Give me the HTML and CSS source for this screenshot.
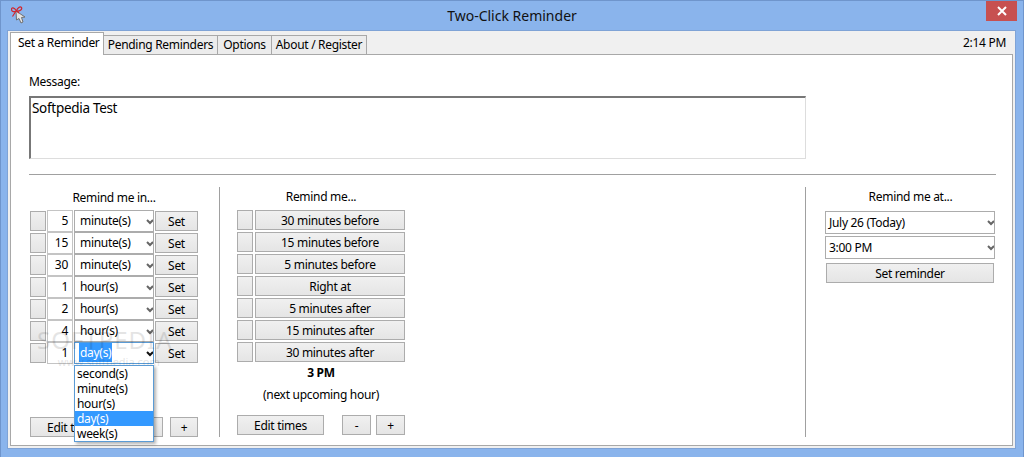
FILE: index.html
```html
<!DOCTYPE html>
<html>
<head>
<title>Two-Click Reminder</title>
<link rel="stylesheet" href="styles.css">
</head>
<body>
    <div class="window">
        <div class="title-bar">
            <svg class="app-icon" width="16" height="18" viewBox="0 0 16 18">
                <path d="M5 5 L5.5 14 L8 12.5 L10 17 L12 16 L10.5 11.5 L14 11 Z" fill="#e4e4e4" stroke="#707070" stroke-width="1"/>
                <path d="M5.5 5 C3 1 0.5 1 0.5 3.5 C0.5 6 3.5 6 5.5 5 C6.5 2 9 0 10.5 1.5 C11.5 3.5 8.5 5.5 5.5 5 M5 5 L1.5 10.5 M6 5 L8 7" fill="none" stroke="#d0272f" stroke-width="1.2"/>
            </svg>
            <span class="title-text">Two-Click Reminder</span>
            <button class="close-btn">
                <svg width="10" height="10" viewBox="0 0 10 10"><path d="M1 1 L9 9 M9 1 L1 9" stroke="#fff" stroke-width="2"/></svg>
            </button>
        </div>
        <div class="client">
            <div class="tab-row">
                <div class="tab active">Set a Reminder</div>
                <div class="tab tab-pending">Pending Reminders</div>
                <div class="tab tab-options">Options</div>
                <div class="tab tab-about">About / Register</div>
                <div class="clock">2:14 PM</div>
            </div>
            <div class="panel">
                <div class="message-label">Message:</div>
                <div class="message-box">Softpedia Test</div>
                <div class="rule"></div>
                <div class="columns">
                    <div class="col col-in">
                        <div class="col-title">Remind me in...</div>
                        <div class="row"><button class="btn square"></button><div class="num">5</div><div class="select unit">minute(s)<svg class="chev" width="8" height="6" viewBox="0 0 8 6"><path d="M1 1 L4 4 L7 1" fill="none" stroke="#666" stroke-width="2"/></svg></div><button class="btn set">Set</button></div>
                        <div class="row"><button class="btn square"></button><div class="num">15</div><div class="select unit">minute(s)<svg class="chev" width="8" height="6" viewBox="0 0 8 6"><path d="M1 1 L4 4 L7 1" fill="none" stroke="#666" stroke-width="2"/></svg></div><button class="btn set">Set</button></div>
                        <div class="row"><button class="btn square"></button><div class="num">30</div><div class="select unit">minute(s)<svg class="chev" width="8" height="6" viewBox="0 0 8 6"><path d="M1 1 L4 4 L7 1" fill="none" stroke="#666" stroke-width="2"/></svg></div><button class="btn set">Set</button></div>
                        <div class="row"><button class="btn square"></button><div class="num">1</div><div class="select unit">hour(s)<svg class="chev" width="8" height="6" viewBox="0 0 8 6"><path d="M1 1 L4 4 L7 1" fill="none" stroke="#666" stroke-width="2"/></svg></div><button class="btn set">Set</button></div>
                        <div class="row"><button class="btn square"></button><div class="num">2</div><div class="select unit">hour(s)<svg class="chev" width="8" height="6" viewBox="0 0 8 6"><path d="M1 1 L4 4 L7 1" fill="none" stroke="#666" stroke-width="2"/></svg></div><button class="btn set">Set</button></div>
                        <div class="row"><button class="btn square"></button><div class="num">4</div><div class="select unit">hour(s)<svg class="chev" width="8" height="6" viewBox="0 0 8 6"><path d="M1 1 L4 4 L7 1" fill="none" stroke="#666" stroke-width="2"/></svg></div><button class="btn set">Set</button></div>
                        <div class="row"><button class="btn square"></button><div class="num">1</div><div class="select unit open"><span class="picked">day(s)</span><svg class="chev" width="8" height="6" viewBox="0 0 8 6"><path d="M1 1 L4 4 L7 1" fill="none" stroke="#111" stroke-width="2"/></svg></div><button class="btn set">Set</button></div>
                        <div class="bottom-row"><button class="btn edit">Edit times</button><button class="btn small minus">-</button><button class="btn small">+</button></div>
                        <div class="watermark">SOFTPEDIA<span class="watermark-url">www.softpedia.com</span></div>
                        <ul class="dropdown">
                            <li>second(s)</li>
                            <li>minute(s)</li>
                            <li>hour(s)</li>
                            <li class="current">day(s)</li>
                            <li>week(s)</li>
                        </ul>
                    </div>
                    <div class="col col-me">
                        <div class="inner">
                            <div class="col-title">Remind me...</div>
                            <div class="row tight"><button class="btn square"></button><button class="btn wide">30 minutes before</button></div>
                            <div class="row tight"><button class="btn square"></button><button class="btn wide">15 minutes before</button></div>
                            <div class="row tight"><button class="btn square"></button><button class="btn wide">5 minutes before</button></div>
                            <div class="row tight"><button class="btn square"></button><button class="btn wide">Right at</button></div>
                            <div class="row tight"><button class="btn square"></button><button class="btn wide">5 minutes after</button></div>
                            <div class="row tight"><button class="btn square"></button><button class="btn wide">15 minutes after</button></div>
                            <div class="row tight"><button class="btn square"></button><button class="btn wide">30 minutes after</button></div>
                            <div class="hour">3 PM</div>
                            <div class="hour-note">(next upcoming hour)</div>
                            <div class="bottom-row"><button class="btn edit">Edit times</button><button class="btn small minus">-</button><button class="btn small">+</button></div>
                        </div>
                    </div>
                    <div class="col col-at">
                        <div class="col-title">Remind me at...</div>
                        <div class="select date">July 26 (Today)<svg class="chev" width="8" height="6" viewBox="0 0 8 6"><path d="M1 1 L4 4 L7 1" fill="none" stroke="#666" stroke-width="2"/></svg></div>
                        <div class="select date">3:00 PM<svg class="chev" width="8" height="6" viewBox="0 0 8 6"><path d="M1 1 L4 4 L7 1" fill="none" stroke="#666" stroke-width="2"/></svg></div>
                        <button class="btn set-reminder">Set reminder</button>
                    </div>
                </div>
            </div>
        </div>
    </div>
</body>
</html>
```

FILE: styles.css
```css
* {
    box-sizing: border-box;
}

body {
    margin: 0;
    font-family: 'Noto Sans', 'Open Sans', sans-serif;
    font-size: 12px;
    letter-spacing: -0.3px;
    color: #000000;
    background-color: #8ab4ec;
    overflow: hidden;
}

.window {
    width: 1024px;
    height: 457px;
    background-color: #8ab4ec;
    border: 1px solid #6f95cc;
    border-bottom: none;
    display: flex;
    flex-direction: column;
}

.title-bar {
    height: 29px;
    display: flex;
    align-items: flex-start;
    position: relative;
    flex-shrink: 0;
}

.app-icon {
    margin: 5px 0 0 10px;
}

.title-text {
    position: absolute;
    left: 0;
    right: 0;
    top: 5px;
    text-align: center;
    font-size: 14px;
    letter-spacing: 0;
    line-height: 20px;
    color: #111111;
}

.close-btn {
    margin-left: auto;
    margin-right: 6px;
    width: 31px;
    height: 20px;
    border: none;
    padding: 0;
    background-color: #c75050;
    display: flex;
    align-items: center;
    justify-content: center;
    position: relative;
}

.client {
    margin: 0 7px 8px 6px;
    height: 419px;
    background-color: #f0f0f0;
    border: 1px solid #7fa3d6;
    padding: 1px 2px 2px 2px;
    display: flex;
    flex-direction: column;
}

.tab-row {
    height: 22px;
    display: flex;
    align-items: flex-end;
    position: relative;
    z-index: 1;
}

.tab {
    height: 19px;
    border: 1px solid #a8a8a8;
    border-bottom: none;
    border-left-width: 0;
    background-color: #ececec;
    line-height: 18px;
    text-align: center;
    white-space: nowrap;
}

.tab.active {
    height: 23px;
    width: 94px;
    margin-bottom: -1px;
    padding: 0 0 0 7px;
    border-left-width: 1px;
    background-color: #ffffff;
    line-height: 20px;
    text-align: left;
}

.tab-pending {
    width: 114px;
}

.tab-options {
    width: 54px;
}

.tab-about {
    width: 95px;
}

.clock {
    margin-left: auto;
    margin-right: 7px;
    align-self: center;
    line-height: 18px;
}

.panel {
    flex: 1;
    background-color: #ffffff;
    border: 1px solid #a8a8a8;
    padding: 18px 16px 8px 18px;
    display: flex;
    flex-direction: column;
}

.message-label {
    line-height: 18px;
}

.message-box {
    width: 777px;
    height: 63px;
    margin-top: 5px;
    padding: 1px 0 0 1px;
    border-top: 2px solid #777777;
    border-left: 2px solid #777777;
    border-right: 1px solid #dddddd;
    border-bottom: 1px solid #dddddd;
    font-size: 13.5px;
    line-height: 19px;
}

.rule {
    height: 1px;
    margin-top: 15px;
    background-color: #a0a0a0;
}

.columns {
    display: flex;
    flex: 1;
    margin-top: 12px;
}

.col {
    position: relative;
    height: 250px;
}

.col-title {
    height: 23px;
    line-height: 20px;
    text-align: center;
}

.col-in {
    width: 190px;
    padding-left: 1px;
}

.col-in .col-title {
    width: 168px;
    padding-top: 1px;
}

.col-me {
    width: 586px;
    border-left: 1px solid #a0a0a0;
    padding-left: 17px;
}

.col-me .col-title {
    height: 22px;
}

.inner {
    width: 168px;
}

.col-at {
    flex: 1;
    border-left: 1px solid #a0a0a0;
    padding-left: 19px;
}

.col-at .col-title {
    height: 24px;
}

.row {
    display: flex;
    align-items: center;
    height: 22px;
    width: 168px;
}

.btn {
    height: 20px;
    padding: 0;
    font-family: inherit;
    font-size: 12px;
    letter-spacing: -0.3px;
    color: #000000;
    border: 1px solid #acacac;
    background: linear-gradient(#f0f0f0, #e5e5e5);
}

.square {
    width: 16px;
    flex-shrink: 0;
}

.num {
    width: 26px;
    height: 22px;
    margin-left: 1px;
    padding-right: 4px;
    text-align: right;
    line-height: 20px;
    border: 1px solid #c4c4c4;
    background-color: #ffffff;
    flex-shrink: 0;
}

.select {
    position: relative;
    height: 23px;
    border: 1px solid #acacac;
    background-color: #ffffff;
    line-height: 21px;
    overflow: hidden;
}

.unit {
    width: 80px;
    height: 22px;
    margin-left: 1px;
    padding-left: 5px;
    line-height: 20px;
    flex-shrink: 0;
}

.chev {
    position: absolute;
    right: -1px;
    top: 8px;
}

.unit.open {
    border-color: #5a9bd5;
}

.picked {
    background-color: #3399ff;
    color: #ffffff;
    padding: 1px;
    margin-left: -1px;
}

.set {
    width: 43px;
    margin-left: 1px;
    flex-shrink: 0;
}

.wide {
    width: 150px;
    margin-left: 2px;
}

.hour {
    line-height: 20px;
    text-align: center;
    font-weight: 700;
}

.hour-note {
    margin-top: 2px;
    line-height: 20px;
    text-align: center;
}

.bottom-row {
    display: flex;
    width: 168px;
    margin-top: 10px;
}

.col-in .bottom-row {
    margin-top: 53px;
}

.edit {
    width: 87px;
}

.small {
    width: 29px;
    margin-left: 5px;
}

.small.minus {
    margin-left: 18px;
}

.col-in .small {
    width: 28px;
    margin-left: 7px;
}

.col-in .small.minus {
    margin-left: 18px;
}

.date {
    width: 170px;
    margin-bottom: 2px;
    padding-left: 3px;
}

.set-reminder {
    display: block;
    width: 168px;
    margin: 4px 0 0 1px;
}

.watermark {
    position: absolute;
    left: 8px;
    top: 139px;
    font-size: 24px;
    letter-spacing: 1px;
    line-height: 28px;
    color: #000000;
    opacity: 0.1;
    pointer-events: none;
}

.watermark-url {
    display: block;
    margin-top: 2px;
    font-size: 11px;
    line-height: 12px;
    letter-spacing: 0;
    text-align: center;
    padding-left: 8px;
}

.dropdown {
    position: absolute;
    left: 45px;
    top: 178px;
    width: 80px;
    margin: 0;
    padding: 0;
    list-style: none;
    background-color: #ffffff;
    border: 1px solid #5a9bd5;
    box-shadow: 2px 2px 3px rgba(0, 0, 0, 0.3);
}

.dropdown li {
    height: 15px;
    padding-left: 2px;
    line-height: 15px;
}

.dropdown li.current {
    background-color: #3399ff;
    color: #ffffff;
}
```
